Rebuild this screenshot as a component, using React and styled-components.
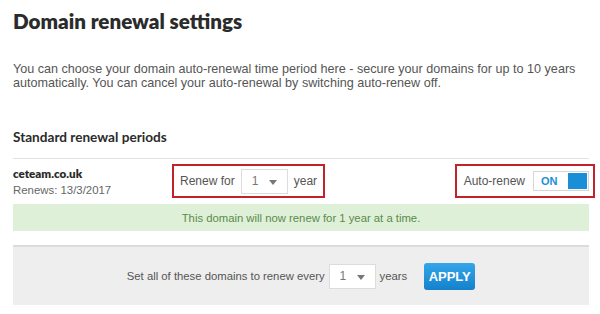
import React, { useState } from 'react'
import styled, { createGlobalStyle } from 'styled-components'

const GlobalStyle = createGlobalStyle`
  body {
    margin: 0;
    background: #fff;
    font-family: "Liberation Sans", Arial, sans-serif;
    color: #444;
  }
`

const Page = styled.div`
  width: 576px;
  margin: 0 0 0 13px;
  padding-top: 6px;
`

const Title = styled.h1`
  margin: 0;
  font-family: Lato, "Noto Sans", sans-serif;
  font-weight: 800;
  font-size: 20.6px;
  line-height: 30px;
  color: #2b2b2b;
`

const Intro = styled.p`
  margin: 26px 0 0;
  font-size: 12.6px;
  line-height: 14px;
  color: #555;
`

const SubTitle = styled.h2`
  margin: 38px 0 0;
  font-family: Lato, "Noto Sans", sans-serif;
  font-weight: 700;
  font-size: 13.6px;
  line-height: 18px;
  color: #2b2b2b;
  padding-bottom: 12px;
  border-bottom: 1px solid #e2e2e2;
`

const Row = styled.div`
  display: grid;
  grid-template-columns: 159px auto 1fr auto;
  align-items: center;
  padding: 5px 0 6px;
`

const DomainCol = styled.div`
  display: flex;
  flex-direction: column;
  gap: 4px;
`

const DomainName = styled.div`
  font-family: Lato, "Noto Sans", sans-serif;
  font-weight: 800;
  font-size: 11.6px;
  color: #2b2b2b;
`

const Renews = styled.div`
  font-size: 11.4px;
  color: #666;
`

const Marked = styled.div`
  display: flex;
  align-items: center;
  gap: ${(p) => p.$gap || 6}px;
  height: 30px;
  padding: ${(p) => p.$pad || '0 6px'};
  border: 2px solid #c3222a;
  font-size: 12px;
  color: #555;
  grid-column: ${(p) => p.$col};
  margin-right: ${(p) => p.$mr || 0}px;
`

const SelectBox = styled.div`
  position: relative;
  width: 47px;
  height: 25px;
  box-sizing: border-box;
  border: 1px solid #dcdcdc;
  background: #fff;
  display: flex;
  align-items: center;
  padding-left: 10px;
  font-size: 12px;
  color: #777;
  &::after {
    content: '';
    position: absolute;
    right: 10px;
    top: 10px;
    border-left: 4px solid transparent;
    border-right: 4px solid transparent;
    border-top: 5px solid #777;
  }
`

const Toggle = styled.button`
  display: flex;
  align-items: stretch;
  width: 56px;
  height: 20px;
  padding: 1px;
  box-sizing: border-box;
  border: 1px solid #d6d6d6;
  background: #fff;
  cursor: pointer;
  font-family: "Liberation Sans", Arial, sans-serif;
`

const ToggleLabel = styled.span`
  flex: 1;
  display: flex;
  align-items: center;
  padding-left: 6px;
  font-size: 11px;
  font-weight: 700;
  color: #1a8fd8;
`

const ToggleKnob = styled.span`
  width: 19px;
  background: #1a8fd8;
`

const Notice = styled.div`
  height: 27px;
  display: flex;
  align-items: center;
  justify-content: center;
  background: #dff0d8;
  color: #5b8a4c;
  font-size: 11.3px;
`

const BulkPanel = styled.div`
  margin-top: 14px;
  height: 58px;
  background: #eeeeee;
  border-top: 2px solid #dcdcdc;
  display: flex;
  align-items: center;
  justify-content: center;
  gap: 4px;
  font-size: 11.3px;
  color: #555;
`

const ApplyButton = styled.button`
  margin-left: 13px;
  height: 27px;
  width: 51px;
  padding: 0;
  border: none;
  border-radius: 3px;
  background: linear-gradient(#35a6e8, #1481cc);
  color: #fff;
  font-family: "Liberation Sans", Arial, sans-serif;
  font-weight: 700;
  font-size: 13px;
  cursor: pointer;
`

const App = () => {
  const [autoRenew, setAutoRenew] = useState(true)

  return (
    <Page>
      <GlobalStyle />
      <Title>Domain renewal settings</Title>
      <Intro>
        You can choose your domain auto-renewal time period here - secure your domains for up to 10 years
        automatically. You can cancel your auto-renewal by switching auto-renew off.
      </Intro>
      <SubTitle>Standard renewal periods</SubTitle>
      <Row>
        <DomainCol>
          <DomainName>ceteam.co.uk</DomainName>
          <Renews>Renews: 13/3/2017</Renews>
        </DomainCol>
        <Marked $col={2}>
          Renew for
          <SelectBox>1</SelectBox>
          year
        </Marked>
        <Marked $col={4} $mr={-6} $pad="0 4px 0 7px" $gap={8}>
          Auto-renew
          <Toggle onClick={() => setAutoRenew(!autoRenew)}>
            <ToggleLabel>{autoRenew ? 'ON' : 'OFF'}</ToggleLabel>
            <ToggleKnob />
          </Toggle>
        </Marked>
      </Row>
      <Notice>This domain will now renew for 1 year at a time.</Notice>
      <BulkPanel>
        Set all of these domains to renew every
        <SelectBox>1</SelectBox>
        years
        <ApplyButton>APPLY</ApplyButton>
      </BulkPanel>
    </Page>
  )
}

export default App
